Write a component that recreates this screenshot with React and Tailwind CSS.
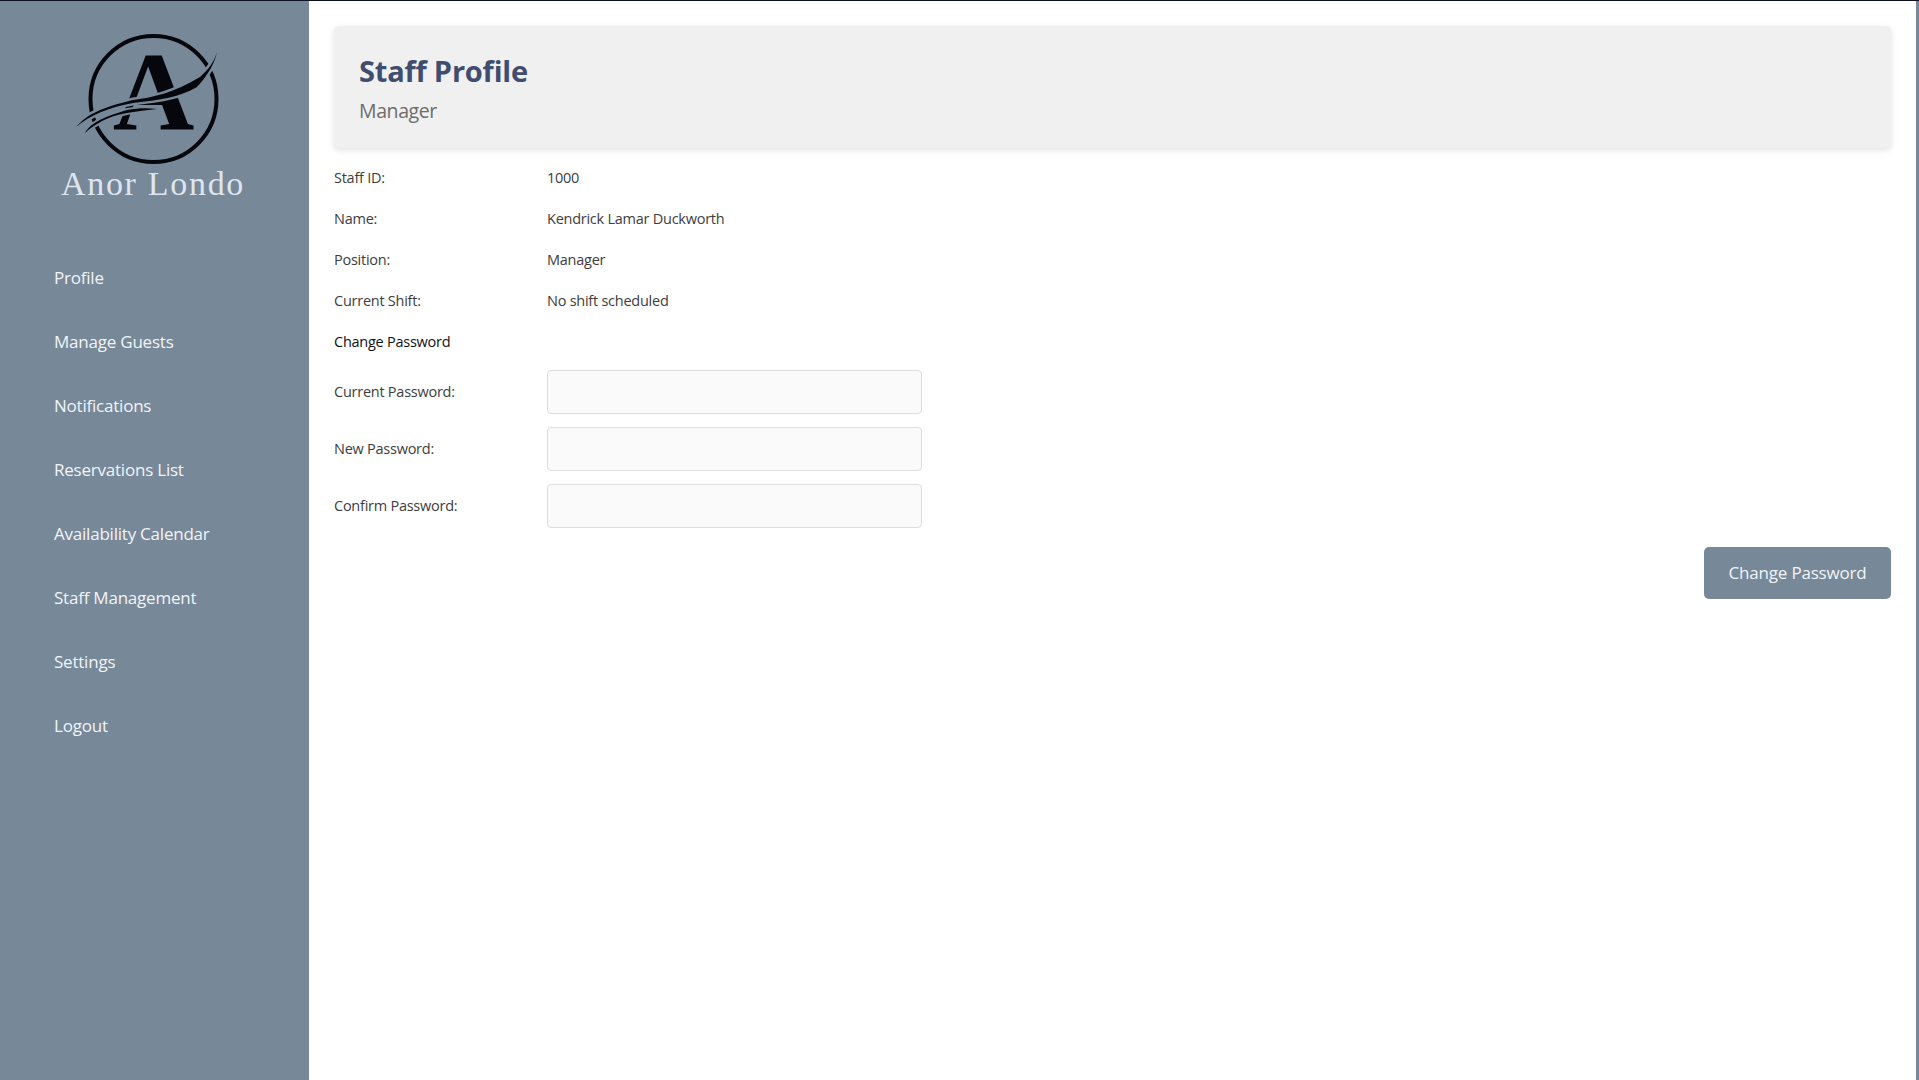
const nav = ["Profile","Manage Guests","Notifications","Reservations List","Availability Calendar","Staff Management","Settings","Logout"];
const info = [["Staff ID:","1000"],["Name:","Kendrick Lamar Duckworth"],["Position:","Manager"],["Current Shift:","No shift scheduled"]];
const pw = ["Current Password:","New Password:","Confirm Password:"];

const upper = "M76 127 C88 114 100 108 133 100 C155 97 173 93 200 77 C208 70 214 62 217 52 C215 62 209 74 197 87 C180 97 160 100 133 103 C110 107 90 115 76 127Z";
const lower = "M85 133 C90 124 100 118 127 110 C138 108 148 108 157 109 C145 110 135 112 127 113 C110 116 97 122 85 133Z";

function Logo() {
  return (
    <svg width="190" height="136" viewBox="60 30 190 136" className="blur-[0.4px]">
      <circle cx="153.5" cy="99" r="63" fill="none" stroke="#05070c" strokeWidth="4" />
      <text x="153.5" y="130" textAnchor="middle" fontFamily="Liberation Serif" fontWeight="700" fontSize="113" fill="#05070c">A</text>
      <path d={upper} fill="#778899" stroke="#778899" strokeWidth="5" />
      <path d={lower} fill="#778899" stroke="#778899" strokeWidth="4" />
      <path d={upper} fill="#05070c" />
      <path d={lower} fill="#05070c" />
    </svg>
  );
}

export default function App() {
  return (
    <div className="flex h-screen overflow-hidden bg-white border-t border-[#0a1020] font-['Open_Sans','Noto_Sans',sans-serif]">
      <aside className="w-[309px] shrink-0 bg-[#778899] flex flex-col">
        <div className="h-[209px] pt-[29px] flex flex-col items-center">
          <Logo />
          <div className="pr-[3px] font-['Liberation_Serif',serif] text-[34px] leading-[36px] tracking-[1.7px] text-[#dfe5ee] font-normal">Anor Londo</div>
        </div>
        <nav className="flex flex-col pl-[54px] pt-[36px]">
          {nav.map((n) => (
            <a key={n} className="h-[64px] flex items-center text-[17px] tracking-[-0.22px] text-[#f1f4f7]">{n}</a>
          ))}
        </nav>
      </aside>
      <main className="flex-1 pl-[25px] pr-[25px] pt-[25px] border-r-[3px] border-[#778899]">
        <header className="h-[122px] bg-[#f0f0f0] rounded-[5px] shadow-[0_2px_6px_rgba(0,0,0,0.12)] pl-[25px] pt-[25px]">
          <h1 className="text-[29px] leading-[40px] font-bold text-[#3f4d6f] tracking-[-0.2px]">Staff Profile</h1>
          <p className="mt-[6px] text-[19.5px] leading-[28px] text-[#6d6d6d] tracking-[-0.4px]">Manager</p>
        </header>
        <div className="mt-[9px] flex flex-col">
          {info.map(([l, v]) => (
            <div key={l} className="h-[41px] flex items-center text-[14.5px] tracking-[-0.25px] text-[#3d3d3d]">
              <span className="w-[213px]">{l}</span><span>{v}</span>
            </div>
          ))}
          <div className="h-[41px] flex items-center text-[14.5px] tracking-[-0.25px] text-[#111]">Change Password</div>
        </div>
        <div className="mt-[8px] flex flex-col gap-[13px]">
          {pw.map((l) => (
            <label key={l} className="flex items-center text-[14.5px] tracking-[-0.25px] text-[#3d3d3d]">
              <span className="w-[213px]">{l}</span>
              <input type="password" className="w-[375px] h-[44px] bg-[#fafafa] border border-[#dddddd] rounded-[4px]" />
            </label>
          ))}
        </div>
        <div className="mt-[19px] flex justify-end">
          <button className="w-[187px] h-[52px] rounded-[5px] bg-[#778899] text-[#f1f4f7] text-[17px] tracking-[-0.2px] pb-[1px]">Change Password</button>
        </div>
      </main>
    </div>
  );
}
